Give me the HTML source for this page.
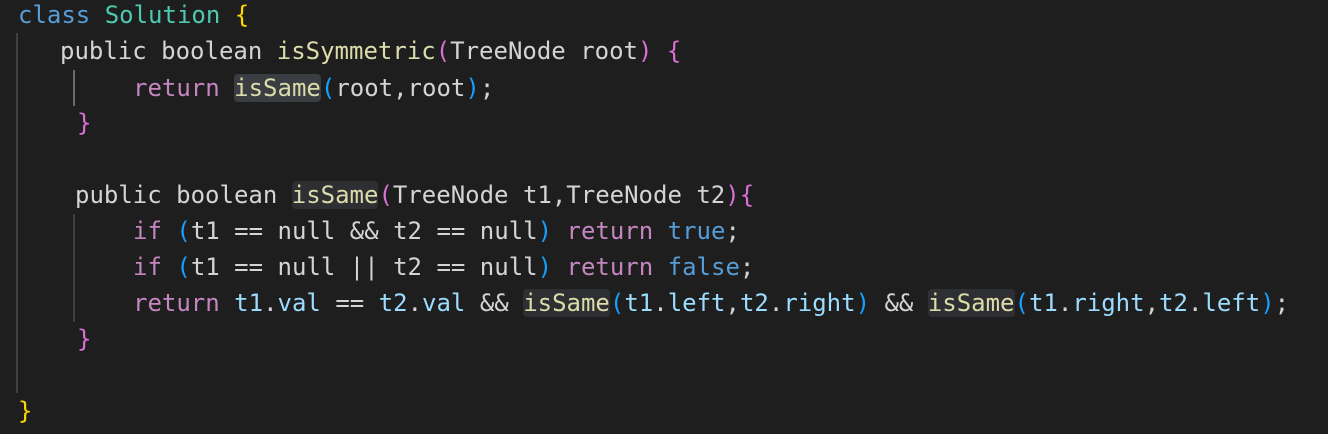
<!DOCTYPE html>
<html><head><style>
body{margin:0;background:#1e1e1e;width:1328px;height:434px;overflow:hidden;position:relative;font-family:"DejaVu Sans Mono","Liberation Mono",monospace;font-size:24px;color:#d4d4d4}
.l{position:absolute;white-space:pre;line-height:36px;height:36px}
.k{color:#569cd6}.c{color:#4ec9b0}.y{color:#ffd700}.f{color:#dcdcaa}.p{color:#da70d6}.b{color:#179fff}.r{color:#c586c0}.v{color:#9cdcfe}
.h{background:#2d2f33;border-radius:4px}.h2{background:#3a3d41;border-radius:4px}
.g{position:absolute;width:2px;background:#404040}
</style></head><body>
<div class="g" style="left:16px;top:33px;height:360px"></div>
<div class="g" style="left:73px;top:70px;height:36px;background:#6a6a6a"></div>
<div class="g" style="left:73px;top:214px;height:108px"></div>
<div class="l" style="left:18px;top:-3px"><span class="k">class</span> <span class="c">Solution</span> <span class="y">{</span></div>
<div class="l" style="left:60px;top:33px">public boolean <span class="f">isSymmetric</span><span class="p">(</span>TreeNode root<span class="p">)</span> <span class="p">{</span></div>
<div class="l" style="left:133px;top:70px"><span class="r">return</span> <span class="f h2">isSame</span><span class="b">(</span>root,root<span class="b">)</span>;</div>
<div class="l" style="left:77px;top:105px"><span class="p">}</span></div>
<div class="l" style="left:75px;top:177px">public boolean <span class="f h">isSame</span><span class="p">(</span>TreeNode t1,TreeNode t2<span class="p">)</span><span class="p">{</span></div>
<div class="l" style="left:133px;top:213px"><span class="r">if</span> <span class="b">(</span>t1 == null &amp;&amp; t2 == null<span class="b">)</span> <span class="r">return</span> <span class="k">true</span>;</div>
<div class="l" style="left:133px;top:249px"><span class="r">if</span> <span class="b">(</span>t1 == null || t2 == null<span class="b">)</span> <span class="r">return</span> <span class="k">false</span>;</div>
<div class="l" style="left:133px;top:285px"><span class="r">return</span> <span class="v">t1</span>.<span class="v">val</span> == <span class="v">t2</span>.<span class="v">val</span> &amp;&amp; <span class="f h">isSame</span><span class="b">(</span><span class="v">t1</span>.<span class="v">left</span>,<span class="v">t2</span>.<span class="v">right</span><span class="b">)</span> &amp;&amp; <span class="f h">isSame</span><span class="b">(</span><span class="v">t1</span>.<span class="v">right</span>,<span class="v">t2</span>.<span class="v">left</span><span class="b">)</span>;</div>
<div class="l" style="left:77px;top:321px"><span class="p">}</span></div>
<div class="l" style="left:18px;top:393px"><span class="y">}</span></div>
</body></html>
